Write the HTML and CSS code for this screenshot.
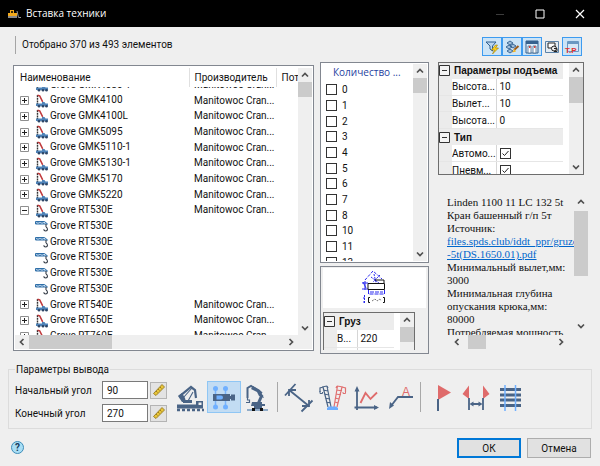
FILE: index.html
```html
<!DOCTYPE html>
<html lang="ru">
<head>
  <meta charset="UTF-8" />
  <meta name="viewport" content="width=device-width, initial-scale=1.0"/>
  <title>Вставка техники</title>
  <link rel="stylesheet" href="styles.css">
</head>
<body>
  <!-- shared icons -->
  <svg class="sprite" aria-hidden="true">
    <symbol id="i-truck" viewBox="0 0 14 14">
      <path d="M2.500 1v9" stroke="#333" stroke-width="1.400" stroke-dasharray="2 .7"/>
      <path d="M2.500 1.200l2.200.6 3 6" fill="none" stroke="#c0393c" stroke-width="1.500"/>
      <path d="M1 9.500h6V8h2.500l1 1.500H13v2.500H1z" fill="#4f83b8"/>
      <g fill="#2c4566"><circle cx="4" cy="12.300" r="1.300"/><circle cx="8" cy="12.300" r="1.300"/><circle cx="11.500" cy="12.300" r="1.300"/></g>
    </symbol>
    <symbol id="i-hook" viewBox="0 0 14 14">
      <path d="M.5 2.500h9l3 2.500H.5z" fill="#cfe2f3" stroke="#2f6fa8"/>
      <path d="M1 5l2-2.500L5 5l2-2.500L9 5" fill="none" stroke="#2f6fa8" stroke-width=".8"/>
      <path d="M11 5v3M11 8c2 1 2 4-.3 4-1.200 0-1.900-.7-1.900-1.700" fill="none" stroke="#333b46" stroke-width="1.100"/>
    </symbol>
    <symbol id="i-up" viewBox="0 0 10 10"><path d="M2 6.500l3-3 3 3" fill="none" stroke="#505050" stroke-width="1.700"/></symbol>
    <symbol id="i-down" viewBox="0 0 10 10"><path d="M2 3.500l3 3 3-3" fill="none" stroke="#505050" stroke-width="1.700"/></symbol>
    <symbol id="i-left" viewBox="0 0 10 10"><path d="M6.500 2l-3 3 3 3" fill="none" stroke="#505050" stroke-width="1.700"/></symbol>
    <symbol id="i-right" viewBox="0 0 10 10"><path d="M3.500 2l3 3-3 3" fill="none" stroke="#505050" stroke-width="1.700"/></symbol>
    <symbol id="i-plus" viewBox="0 0 9 9"><path d="M.5.5h8v8h-8z" fill="#fff" stroke="#8f8f8f"/><path d="M2 4.500h5M4.500 2v5" stroke="#222"/></symbol>
    <symbol id="i-minus" viewBox="0 0 9 9"><path d="M.5.5h8v8h-8z" fill="#fff" stroke="#8f8f8f"/><path d="M2 4.500h5" stroke="#222"/></symbol>
    <symbol id="i-collapse" viewBox="0 0 11 11"><path d="M.5.5h10v10H.5z" fill="#f4f4f4" stroke="#333"/><path d="M3 5.500h5" stroke="#333"/></symbol>
    <symbol id="i-ruler" viewBox="0 0 14 14">
      <path d="M1.500 10.500L10 1.500l2.500 2.500-8.500 8.500z" fill="#e8c53a" stroke="#8a6d14" stroke-width=".8"/>
      <path d="M4 8l1.500 1.500M6 6l1.500 1.500M8 4l1.500 1.500" stroke="#8a6d14" stroke-width=".8"/>
    </symbol>
  </svg>

  <header class="titlebar">
    <svg class="app-icon" viewBox="0 0 14 10">
      <path d="M1 6V4h2V1h4v3h3v3H1z" fill="#f2a91c"/>
      <path d="M4 2h2v2H4z" fill="#3a2a08"/>
      <path d="M1 7h9v2H1z" fill="#8b8b8b"/>
      <path d="M10 2l1.500 6.500H14" fill="none" stroke="#999"/>
    </svg>
    <h1>Вставка техники</h1>
    <div class="window-buttons">
      <button type="button" aria-label="Свернуть"><svg viewBox="0 0 10 10"><path d="M1 5.500h8" stroke="#3c3c3c"/></svg></button>
      <button type="button" aria-label="Развернуть"><svg viewBox="0 0 10 10"><path d="M1 1h8v8H1z" fill="none" stroke="#fff"/></svg></button>
      <button type="button" aria-label="Закрыть"><svg viewBox="0 0 10 10"><path d="M1 1l8 8M9 1L1 9" stroke="#fff" stroke-width="1.200"/></svg></button>
    </div>
  </header>

  <div class="topbar">
    <p class="count">Отобрано 370 из 493 элементов</p>
    <div class="view-buttons">
      <button type="button" class="on" aria-label="Фильтр">
        <svg viewBox="0 0 16 16"><path d="M2 3h10L8.500 7v5L6 10V7z" fill="#b9d4ee" stroke="#2f5f8f"/><path d="M11.500 6L7.500 11h3l-2 4 6-6h-3l2-3z" fill="#ffd21f" stroke="#9c7a00" stroke-width=".6"/></svg>
      </button>
      <button type="button" class="on" aria-label="Оформление">
        <svg viewBox="0 0 16 16"><path d="M3 4l3-2 3 2-3 2zM2 8l3-2 3 2-3 2zM6 7l3-2 3 2-3 2zM3 12l3-2 3 2-3 2z" fill="#9fbcda" stroke="#2f5f8f" stroke-width=".9"/><path d="M14.500 7L10 11" stroke="#9a5a1c" stroke-width="2"/><path d="M10.500 10L8 13.500l4-1z" fill="#f2b21c"/></svg>
      </button>
      <button type="button" class="on" aria-label="Таблица">
        <svg viewBox="0 0 16 16"><path d="M2 2h12v12H2z" fill="#dcebf8" stroke="#2f5f8f"/><path d="M2 2h12v3H2z" fill="#35618e"/><path d="M4 7h3v7H4zM9 7h3v7H9z" fill="#fff" stroke="#49698b" stroke-width=".8"/><path d="M5 7h1.500v2H5zM10 7h1.500v2H10z" fill="#d8403c"/></svg>
      </button>
      <button type="button" aria-label="Просмотр">
        <svg viewBox="0 0 16 16"><path d="M1.500 2.500h13v11h-13z" fill="#e4ecf3" stroke="#5b82a8"/><path d="M4 4h7v5H4z" fill="#fff" stroke="#222"/><circle cx="10" cy="9.500" r="2.500" fill="#eee" stroke="#222"/><path d="M10 9.500h3v3h-3" fill="none" stroke="#222"/></svg>
      </button>
      <button type="button" class="on" aria-label="Технические параметры">
        <svg viewBox="0 0 16 16"><path d="M3.500 2.500h11v10h-11z" fill="#d7e8f7" stroke="#6a98c2"/><path d="M3.500 4h11" stroke="#6a98c2" stroke-width="2"/><text x="1" y="14" class="tp">T.P</text></svg>
      </button>
    </div>
  </div>

  <main class="panels">
    <section class="list box">
      <div class="list-view">
        <table class="list-head">
          <colgroup><col class="c-name"><col class="c-maker"><col></colgroup>
          <tr><th>Наименование</th><th>Производитель</th><th>Пот</th></tr>
        </table>
        <div class="list-body">
          <table>
            <colgroup><col class="c-name"><col class="c-maker"><col></colgroup>
            <tr><td><svg class="tw"></svg><svg class="ic"><use href="#i-truck"/></svg>Grove GMK4080-1</td><td>Manitowoc Cran...</td><td></td></tr>
            <tr><td><svg class="tw"><use href="#i-plus"/></svg><svg class="ic"><use href="#i-truck"/></svg>Grove GMK4100</td><td>Manitowoc Cran...</td><td></td></tr>
            <tr><td><svg class="tw"><use href="#i-plus"/></svg><svg class="ic"><use href="#i-truck"/></svg>Grove GMK4100L</td><td>Manitowoc Cran...</td><td></td></tr>
            <tr><td><svg class="tw"><use href="#i-plus"/></svg><svg class="ic"><use href="#i-truck"/></svg>Grove GMK5095</td><td>Manitowoc Cran...</td><td></td></tr>
            <tr><td><svg class="tw"><use href="#i-plus"/></svg><svg class="ic"><use href="#i-truck"/></svg>Grove GMK5110-1</td><td>Manitowoc Cran...</td><td></td></tr>
            <tr><td><svg class="tw"><use href="#i-plus"/></svg><svg class="ic"><use href="#i-truck"/></svg>Grove GMK5130-1</td><td>Manitowoc Cran...</td><td></td></tr>
            <tr><td><svg class="tw"><use href="#i-plus"/></svg><svg class="ic"><use href="#i-truck"/></svg>Grove GMK5170</td><td>Manitowoc Cran...</td><td></td></tr>
            <tr><td><svg class="tw"><use href="#i-plus"/></svg><svg class="ic"><use href="#i-truck"/></svg>Grove GMK5220</td><td>Manitowoc Cran...</td><td></td></tr>
            <tr><td><svg class="tw"><use href="#i-minus"/></svg><svg class="ic"><use href="#i-truck"/></svg>Grove RT530E</td><td>Manitowoc Cran...</td><td></td></tr>
            <tr><td><svg class="tw"></svg><svg class="ic"><use href="#i-hook"/></svg>Grove RT530E</td><td></td><td></td></tr>
            <tr><td><svg class="tw"></svg><svg class="ic"><use href="#i-hook"/></svg>Grove RT530E</td><td></td><td></td></tr>
            <tr><td><svg class="tw"></svg><svg class="ic"><use href="#i-hook"/></svg>Grove RT530E</td><td></td><td></td></tr>
            <tr><td><svg class="tw"></svg><svg class="ic"><use href="#i-hook"/></svg>Grove RT530E</td><td></td><td></td></tr>
            <tr><td><svg class="tw"></svg><svg class="ic"><use href="#i-hook"/></svg>Grove RT530E</td><td></td><td></td></tr>
            <tr><td><svg class="tw"><use href="#i-plus"/></svg><svg class="ic"><use href="#i-truck"/></svg>Grove RT540E</td><td>Manitowoc Cran...</td><td></td></tr>
            <tr><td><svg class="tw"><use href="#i-plus"/></svg><svg class="ic"><use href="#i-truck"/></svg>Grove RT650E</td><td>Manitowoc Cran...</td><td></td></tr>
            <tr><td><svg class="tw"><use href="#i-plus"/></svg><svg class="ic"><use href="#i-truck"/></svg>Grove RT760E</td><td>Manitowoc Cran...</td><td></td></tr>
          </table>
        </div>
      </div>
      <div class="vbar">
        <button type="button" aria-label="Вверх"><svg><use href="#i-up"/></svg></button>
        <div class="thumb"></div>
        <button type="button" class="end" aria-label="Вниз"><svg><use href="#i-down"/></svg></button>
      </div>
      <div class="hbar">
        <button type="button" aria-label="Влево"><svg><use href="#i-left"/></svg></button>
        <div class="thumb"></div>
        <button type="button" class="end" aria-label="Вправо"><svg><use href="#i-right"/></svg></button>
      </div>
      <div class="corner"></div>
    </section>

    <div class="middle">
      <section class="filter box">
        <div class="filter-view">
          <h2>Количество ...</h2>
          <div class="checks">
            <label><input type="checkbox">0</label>
            <label><input type="checkbox">1</label>
            <label><input type="checkbox">2</label>
            <label><input type="checkbox">3</label>
            <label><input type="checkbox">4</label>
            <label><input type="checkbox">5</label>
            <label><input type="checkbox">6</label>
            <label><input type="checkbox">7</label>
            <label><input type="checkbox">8</label>
            <label><input type="checkbox">10</label>
            <label><input type="checkbox">11</label>
            <label><input type="checkbox">13</label>
          </div>
        </div>
        <div class="vbar">
          <button type="button" aria-label="Вверх"><svg><use href="#i-up"/></svg></button>
          <div class="thumb"></div>
          <button type="button" class="end" aria-label="Вниз"><svg><use href="#i-down"/></svg></button>
        </div>
      </section>

      <section class="preview box">
        <div class="drawing">
          <svg viewBox="0 0 26 36">
            <g fill="none" stroke="#2a2af0">
              <path d="M3 11l8-9 9 8" stroke-dasharray="3 1.500"/>
              <path d="M9 8l8 6M18 6l-7 7M12 5l2 9" stroke-dasharray="2 1"/>
              <path d="M0 14h6M0 20h6M3 12v9M1 13l3 6" />
              <path d="M6.500 21v4h16v-4M8 23h13" stroke-dasharray="4 1"/>
              <path d="M2.500 26v9M1 29h3M1 33h3" stroke-dasharray="2 1"/>
            </g>
            <path d="M6 14.500h16.500v6H6zM13 11h9v3" fill="none" stroke="#111"/>
            <path d="M8 28.500H6.500v5H8M21 28.500h1.500v5H21" fill="none" stroke="#111"/>
            <path d="M10 32l3-2 2 2 3-2 1 2" fill="none" stroke="#777" stroke-dasharray="2 1"/>
          </svg>
        </div>
        <div class="props props-small">
          <div class="props-view">
            <table>
              <colgroup><col class="c-mark"><col class="c-short"><col></colgroup>
              <tr class="group"><th><svg><use href="#i-collapse"/></svg></th><th colspan="2">Груз</th></tr>
              <tr><td></td><td>В...</td><td>220</td></tr>
              <tr><td></td><td></td><td></td></tr>
            </table>
          </div>
          <div class="vbar">
            <button type="button" aria-label="Вверх"><svg><use href="#i-up"/></svg></button>
            <div class="thumb"></div>
          </div>
        </div>
      </section>
    </div>

    <div class="right">
      <section class="props props-main">
        <div class="props-view">
          <table>
            <colgroup><col class="c-mark"><col class="c-prop"><col></colgroup>
            <tr class="group"><th><svg><use href="#i-collapse"/></svg></th><th colspan="2">Параметры подъема</th></tr>
            <tr><td></td><td>Высота...</td><td>10</td></tr>
            <tr><td></td><td>Вылет...</td><td>10</td></tr>
            <tr><td></td><td>Высота...</td><td>0</td></tr>
            <tr class="group"><th><svg><use href="#i-collapse"/></svg></th><th colspan="2">Тип</th></tr>
            <tr><td></td><td><label for="auto">Автомо...</label></td><td><input type="checkbox" id="auto" checked></td></tr>
            <tr><td></td><td><label for="pnev">Пневм...</label></td><td><input type="checkbox" id="pnev" checked></td></tr>
          </table>
        </div>
        <div class="vbar">
          <button type="button" aria-label="Вверх"><svg><use href="#i-up"/></svg></button>
          <div class="thumb"></div>
          <button type="button" class="end" aria-label="Вниз"><svg><use href="#i-down"/></svg></button>
        </div>
      </section>

      <section class="info">
        <div class="info-text">
          Linden 1100 11 LC 132 5t<br>
          Кран башенный г/п 5т<br>
          Источник:<br>
          <a href="#">files.spds.club/iddt_ppr/gruzop<br>-5t(DS.1650.01).pdf</a><br>
          Минимальный вылет,мм:<br>
          3000<br>
          Минимальная глубина<br>
          опускания крюка,мм:<br>
          80000<br>
          Потребляемая мощность
        </div>
        <div class="vbar">
          <button type="button" aria-label="Вверх"><svg><use href="#i-up"/></svg></button>
          <div class="thumb"></div>
          <button type="button" class="end" aria-label="Вниз"><svg><use href="#i-down"/></svg></button>
        </div>
        <div class="hbar">
          <button type="button" aria-label="Влево"><svg><use href="#i-left"/></svg></button>
          <div class="thumb"></div>
          <button type="button" class="end" aria-label="Вправо"><svg><use href="#i-right"/></svg></button>
        </div>
      </section>
    </div>
  </main>

  <fieldset class="output">
    <legend>Параметры вывода</legend>
    <div class="angles">
      <label for="angle-start">Начальный угол</label>
      <input type="text" id="angle-start" value="90">
      <button type="button" aria-label="Измерить начальный угол"><svg><use href="#i-ruler"/></svg></button>
      <label for="angle-end">Конечный угол</label>
      <input type="text" id="angle-end" value="270">
      <button type="button" aria-label="Измерить конечный угол"><svg><use href="#i-ruler"/></svg></button>
    </div>
    <div class="tools">
      <button type="button" aria-label="Вид сбоку">
        <svg viewBox="0 0 32 32">
          <path d="M10 20L6 15 17 6l4 3 1 8" fill="none" stroke="#4a6486" stroke-width="2.200"/>
          <path d="M4 15l4-3 3 5 1 4H8z" fill="#4a6486"/>
          <path d="M9 17l9-10M14 20l5-9" stroke="#4a6486" stroke-width="1.100"/>
          <path d="M9 19h9v3H9z" fill="#4a6486"/>
          <path d="M3 23.500h19V20h7v7.500H3z" fill="#4a6486"/>
          <path d="M24.500 21.500h3v2.500h-3z" fill="#efefef"/>
          <path d="M3 29h27" stroke="#4a6486" stroke-width="2.500" stroke-dasharray="3 2"/>
        </svg>
      </button>
      <button type="button" class="on" aria-label="Вид сверху">
        <svg viewBox="0 0 32 32">
          <path d="M7.500 8v18M17.500 8v18" stroke="#7ab4fb" stroke-width="1.500"/>
          <g fill="#70b0ff"><circle cx="7.500" cy="7.500" r="2.500"/><circle cx="17.500" cy="7.500" r="2.500"/><circle cx="7.500" cy="26" r="2.500"/><circle cx="17.500" cy="26" r="2.500"/></g>
          <path d="M5 13h17v7H5zM21 15h2v-1.500h4v6h-4V18h-2z" fill="#4a6486"/>
          <path d="M8.500 14.500h4v4h-4z" fill="#70b0ff"/><circle cx="13" cy="16.500" r="2" fill="#70b0ff"/>
        </svg>
      </button>
      <button type="button" aria-label="Вид сзади">
        <svg viewBox="0 0 32 32">
          <path d="M5.500 17V7L9 5l11 7" fill="none" stroke="#4a6486" stroke-width="2"/>
          <path d="M11 5l7 4 4 8-5-2-2-4-6-3z" fill="#4a6486"/>
          <path d="M20 14l-4 9" stroke="#4a6486" stroke-width="3"/>
          <path d="M5.500 17v2h2v2.500H4" fill="none" stroke="#4a6486" stroke-width="1.200"/>
          <path d="M10 21h10v2h3v2h-3v3h-8v-3H9z" fill="#4a6486"/>
          <path d="M5 29h21" stroke="#7296bb" stroke-width="1.500"/>
          <path d="M10 27h3v3h-3zM18 27h3v3h-3z" fill="#111"/>
        </svg>
      </button>
      <span class="sep"></span>
      <button type="button" aria-label="Размер">
        <svg viewBox="0 0 32 32"><path d="M5.500 8.500l21 17M2 14.500L12.500 3M18.500 30.500L29.500 19.500M6 15V9h7M19 25h7v-6" fill="none" stroke="#4a6486" stroke-width="1.800"/></svg>
      </button>
      <button type="button" aria-label="Положения стрелы">
        <svg viewBox="0 0 32 32">
          <path d="M11 26L6 6M14 26L10 5M5 6l5-1M6 9l5 1M7 13l5 1M8 17l4.500 1M9 21l4.500 1M6 6L3 7v4M10 5l1 2" fill="none" stroke="#4a6486" stroke-width="1.200"/>
          <path d="M3 10v2.500h2.500V11" fill="none" stroke="#4a6486"/>
          <path d="M17 26l3.500-21M20 26L25 6M20 5l6 1M20 9l5 1M19 13l5 1M18 17l4 1M18 21l3 1M25 6l3.500 1v4M20 5l-1 2" fill="none" stroke="#e07070" stroke-width="1.200"/>
          <path d="M28.500 10v2.500H26V11" fill="none" stroke="#e07070"/>
          <path d="M10 29v-2l2-1.500h7l2 1.500v2z" fill="#6cadff"/>
        </svg>
      </button>
      <button type="button" aria-label="График">
        <svg viewBox="0 0 32 32">
          <path d="M6 29V7M3.500 26.500H26" stroke="#4a6486" stroke-width="1.800"/>
          <path d="M3.500 10.500L6 5l2.500 5.500zM23 24l5 2.500-5 2.500z" fill="#4a6486"/>
          <path d="M9.500 22L14.500 12l5 6 6.500-6.500" fill="none" stroke="#df6b6b" stroke-width="1.800"/>
        </svg>
      </button>
      <button type="button" aria-label="Выноска">
        <svg viewBox="0 0 32 32">
          <path d="M28 16H13L6 25" fill="none" stroke="#4a6486" stroke-width="1.800"/>
          <path d="M4 28l1-7 4 3.500z" fill="#4a6486"/>
          <text x="17" y="15" class="callout">A</text>
        </svg>
      </button>
      <span class="sep"></span>
      <button type="button" aria-label="Флаг">
        <svg viewBox="0 0 32 32"><path d="M12 4l13 7.500L12 19z" fill="#df6b6b"/><path d="M12 18v12" stroke="#4a6486" stroke-width="2"/></svg>
      </button>
      <button type="button" aria-label="Расстояние между флагами">
        <svg viewBox="0 0 32 32">
          <path d="M9 4.500v13.500L2.500 13zM23 4.500v13.500L29.500 13z" fill="#df6b6b"/>
          <path d="M9 17v12M23 17v12M11 23h10" stroke="#4a6486" stroke-width="1.800"/>
          <path d="M9.500 23l4-2.500v5zM22.500 23l-4-2.500v5z" fill="#4a6486"/>
        </svg>
      </button>
      <button type="button" aria-label="Сетка">
        <svg viewBox="0 0 32 32">
          <path d="M6 8.500h21M6 14h21M6 19h21M6 24.500h21" stroke="#4a6486" stroke-width="2.800"/>
          <path d="M11 4v26M21.500 4v26" stroke="#70b0ff" stroke-width="1.500"/>
        </svg>
      </button>
    </div>
  </fieldset>

  <footer class="footer">
    <button type="button" class="help" aria-label="Справка">?</button>
    <button type="button" class="btn btn-ok">ОК</button>
    <button type="button" class="btn">Отмена</button>
  </footer>
</body>
</html>
```
FILE: styles.css
```css
* {
  box-sizing: border-box;
}

body {
  margin: 0;
  height: 100vh;
  display: flex;
  flex-direction: column;
  background: #efefef;
  color: #111;
  font-family: Roboto, "Liberation Sans", sans-serif;
  font-size: 10px;
  line-height: 13px;
  overflow: hidden;
}

button, input {
  font: inherit;
  color: inherit;
  margin: 0;
  padding: 0;
}

button {
  border: none;
  background: none;
  display: flex;
  align-items: center;
  justify-content: center;
}

table {
  border-collapse: collapse;
  table-layout: fixed;
  width: 100%;
}

th, td {
  padding: 0;
  text-align: left;
  font-weight: normal;
  white-space: nowrap;
  overflow: hidden;
}

.sprite {
  display: none;
}

/* title bar */
.titlebar {
  display: flex;
  align-items: center;
  height: 27px;
  padding-left: 7px;
  background: #000;
  color: #fff;
}

.app-icon {
  width: 14px;
  height: 10px;
}

.titlebar h1 {
  flex: 1;
  margin: 0 0 0 5px;
  font-family: "Open Sans", "Noto Sans", sans-serif;
  font-size: 10px;
  font-weight: normal;
}

.window-buttons {
  display: flex;
}

.window-buttons button {
  width: 40px;
  height: 27px;
}

.window-buttons svg {
  width: 10px;
  height: 10px;
}

/* counter and view switches */
.topbar {
  display: flex;
  justify-content: space-between;
  align-items: center;
  height: 35px;
  padding: 4px 18px 4px 15px;
}

.count {
  margin: 0;
  padding: 2px 0 3px 6px;
  border-left: 1px solid #a5a5a5;
}

.view-buttons {
  display: flex;
}

.view-buttons button {
  width: 20px;
  height: 19px;
  margin-top: 4px;
  border: 1px solid transparent;
}

.view-buttons .on {
  background: #cce4f7;
  border-color: #3d9bf0;
}

.view-buttons svg {
  width: 16px;
  height: 16px;
}

.tp {
  font: bold 8px "Liberation Sans", sans-serif;
  fill: #e03030;
}

/* panels */
.panels {
  flex: 1;
  min-height: 0;
  display: grid;
  grid-template-columns: 1fr 109px 165px;
  gap: 6px;
  padding-left: 13px;
}

.box {
  border: 1px solid #828790;
  background: #fff;
}

.vbar, .hbar {
  display: flex;
  background: #efefef;
}

.vbar {
  flex-direction: column;
  width: 14px;
}

.hbar {
  height: 14px;
}

.vbar button, .hbar button {
  flex: none;
  width: 14px;
  height: 14px;
}

.vbar svg, .hbar svg {
  width: 10px;
  height: 10px;
}

.thumb {
  background: #cbcbcb;
}

.vbar .thumb {
  height: 15px;
}

.vbar .end {
  margin-top: auto;
}

.hbar .end {
  margin-left: auto;
}

/* machine list */
.list {
  margin: 3px 0;
  padding: 2px 1px 1px 1px;
  display: grid;
  grid-template-columns: 1fr 14px;
  grid-template-rows: 1fr 14px;
  min-width: 0;
  min-height: 0;
}

.list-view {
  display: flex;
  flex-direction: column;
  min-width: 0;
  min-height: 0;
  overflow: hidden;
}

.list-head {
  height: 19px;
}

.list-head th {
  border-right: 1px solid #e0e0e0;
  padding-left: 5px;
}

.list-head th:last-child {
  border-right: none;
}

.c-name {
  width: 174px;
}

.c-maker {
  width: 87px;
}

.list-body {
  flex: 1;
  min-height: 0;
  overflow: hidden;
}

/* scrolled a little way into the first row */
.list-body table {
  height: 267px;
  margin-top: -10px;
}

.list-body td {
  padding-left: 5px;
}

.tw {
  width: 9px;
  height: 9px;
  margin-right: 6px;
  vertical-align: middle;
}

.ic {
  width: 14px;
  height: 14px;
  margin-right: 1px;
  vertical-align: middle;
}

.list td {
  line-height: 14px;
}

.list .hbar .thumb {
  width: 83px;
}

.corner {
  background: #efefef;
}

/* axle filter and preview */
.middle {
  display: flex;
  flex-direction: column;
  gap: 3px;
  min-height: 0;
}

.filter {
  flex: 1;
  min-height: 0;
  display: flex;
  justify-content: space-between;
  padding: 1px;
}

.filter-view {
  flex: 1;
  min-width: 0;
  overflow: hidden;
}

.filter h2 {
  margin: 2px 0 3px 11px;
  font-family: "Open Sans", "Noto Sans", sans-serif;
  font-size: 10px;
  font-weight: normal;
  color: #1f3f9f;
}

.checks {
  display: grid;
  grid-auto-rows: 1fr;
  height: 188px;
  padding-left: 4px;
}

.checks label {
  display: flex;
  align-items: center;
  gap: 5px;
}

input[type="checkbox"] {
  appearance: none;
  width: 11px;
  height: 11px;
  border: 1px solid #333;
  background: #fff;
}

input[type="checkbox"]:checked {
  background: #fff url("data:image/svg+xml,%3Csvg xmlns='http://www.w3.org/2000/svg' viewBox='0 0 9 9'%3E%3Cpath d='M1.500 4.500l2 2 4-4.500' fill='none' stroke='%23222'/%3E%3C/svg%3E");
}

.preview {
  height: 88px;
  padding: 1px 2px 2px;
  background: #efefef;
}

.drawing {
  display: flex;
  justify-content: center;
  height: 40px;
  background: #fff;
}

.drawing svg {
  width: 26px;
  height: 38px;
}

/* property grids */
.props {
  display: flex;
  border: 1px solid #6d6d6d;
  background: #fff;
  overflow: hidden;
}

.props-view {
  flex: 1;
  min-width: 0;
  padding-right: 6px;
}

.c-mark {
  width: 13px;
}

.c-prop {
  width: 44px;
}

.c-short {
  width: 20px;
}

.props-view td:first-child, .group {
  background: #ececec;
}

.props-view th {
  font-family: "Liberation Sans", sans-serif;
  font-weight: bold;
  padding-left: 2px;
}

.props-view td {
  border-bottom: 1px solid #e6e6e6;
  border-right: 1px solid #d6d6d6;
  padding-left: 3px;
}

.props-view td:nth-child(2) {
  padding-left: 0;
}

.props-view td:first-child, .props-view td:last-child {
  border-right: none;
}

.props-view th:first-child {
  padding: 0;
}

.props-view svg {
  display: block;
  width: 11px;
  height: 11px;
}

.props-view input {
  display: block;
}

.props-small {
  margin: 4px 11px 0 0;
  height: 38px;
  border-bottom: none;
}

.props-small tr {
  height: 17px;
}

.right {
  display: flex;
  flex-direction: column;
  gap: 18px;
  min-height: 0;
  padding: 0 12px 5px 3px;
}

.props-main {
  height: 113px;
  margin-right: 4px;
}

.props-main table {
  height: 116px;
}

.props-main .vbar .thumb {
  height: 26px;
}

/* description */
.info {
  flex: 1;
  min-height: 0;
  display: grid;
  grid-template-columns: 1fr 14px;
  grid-template-rows: 1fr 14px;
  padding-left: 9px;
}

.info-text {
  min-width: 0;
  min-height: 0;
  overflow: hidden;
  padding-top: 3px;
  font-family: "Liberation Serif", serif;
  font-size: 11px;
  line-height: 13px;
  white-space: nowrap;
}

.info-text a {
  color: #0066cc;
}

.info .vbar button {
  height: 18px;
}

.info .vbar .thumb {
  height: 65px;
}

.info .hbar {
  padding: 0 6px 0 3px;
}

.info .hbar .thumb {
  width: 18px;
  margin-left: 4px;
}

/* output settings */
.output {
  display: flex;
  gap: 8px;
  margin: 9px 8px 0;
  padding: 5px 6px 6px;
  border: 1px solid #dcdcdc;
  min-width: 0;
}

.output legend {
  padding: 0 1px;
}

.angles {
  display: grid;
  grid-template-columns: 87px 46px 17px;
  row-gap: 5px;
  align-items: center;
}

.angles input {
  width: 46px;
  height: 18px;
  padding-left: 4px;
  border: 1px solid #7a7a7a;
  background: #fff;
}

.angles button {
  width: 17px;
  height: 17px;
  margin-left: 2px;
  border: 1px solid #b4b4b4;
  background: #e3e3e3;
}

.angles svg {
  width: 14px;
  height: 14px;
}

.tools {
  display: flex;
  align-items: flex-start;
}

.tools button {
  width: 34px;
  height: 32px;
}

.tools .on {
  background: #c2dcf3;
  border: 1px solid #8fc6f4;
}

.tools svg {
  flex: none;
  width: 32px;
  height: 32px;
}

.sep {
  width: 1px;
  height: 30px;
  margin: 1px 4px 0 2px;
  background: #a8a8a8;
}

.callout {
  font: 12px "Liberation Sans", sans-serif;
  fill: #df6b6b;
}

/* footer */
.footer {
  display: flex;
  align-items: flex-start;
  gap: 6px;
  padding: 9px 9px 8px 11px;
}

.help {
  width: 13px;
  height: 13px;
  margin: 3px auto 0 0;
  border: 1px solid #3e8db8;
  border-radius: 50%;
  background: #a9def5;
  color: #163a5c;
  font-weight: bold;
}

.btn {
  width: 64px;
  height: 20px;
  border: 1px solid #adadad;
  background: #e1e1e1;
}

.btn-ok {
  border: 2px solid #0078d7;
}
```
